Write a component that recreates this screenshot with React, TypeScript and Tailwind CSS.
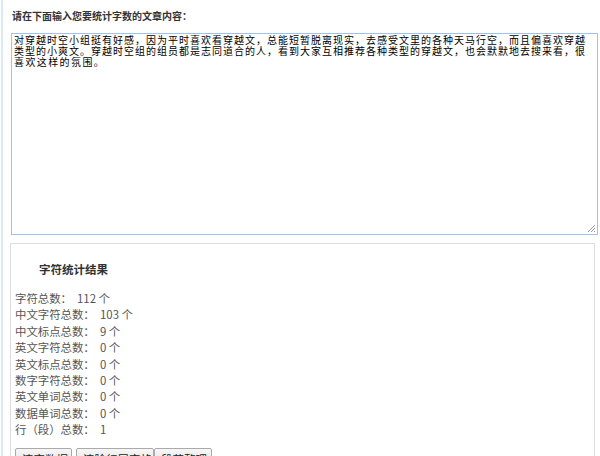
const lines = [
  '对穿越时空小组挺有好感，因为平时喜欢看穿越文，总能短暂脱离现实，去感受文里的各种天马行空，而且偏喜欢穿越',
  '类型的小爽文。穿越时空组的组员都是志同道合的人，看到大家互相推荐各种类型的穿越文，也会默默地去搜来看，很',
];

const stats = [
  ['字符总数：', '112 个', 'w-[62px]'],
  ['中文字符总数：', '103 个', 'w-[85px]'],
  ['中文标点总数：', '9 个', 'w-[85px]'],
  ['英文字符总数：', '0 个', 'w-[85px]'],
  ['英文标点总数：', '0 个', 'w-[85px]'],
  ['数字字符总数：', '0 个', 'w-[85px]'],
  ['英文单词总数：', '0 个', 'w-[85px]'],
  ['数据单词总数：', '0 个', 'w-[85px]'],
  ['行（段）总数：', '1', 'w-[85px]'],
];

const cjk = { fontFamily: '"Noto Sans CJK SC", "Liberation Sans", sans-serif' };

const btn =
  'h-[22px] pt-0 leading-[14px] border border-[#aaa] bg-gradient-to-b from-[#f7f7f7] to-[#dedede] rounded-[2px] text-left pl-[6px] self-start';

function ResizeGrip() {
  return (
    <svg width="9" height="9" viewBox="0 0 9 9" className="absolute right-[1px] bottom-[1px]">
      <path d="M8 1 L1 8 M8 4 L4 8 M8 7 L7 8" stroke="#999" strokeWidth="1" />
    </svg>
  );
}

export default function App() {
  return (
    <div className="w-[600px] h-[456px] overflow-hidden bg-white" style={cjk}>
      <div className="ml-px h-full border-l-2 border-[#dce9f7] pl-[7px] flex flex-col">
        <div className="pt-[10px] pl-[2px] text-[10px] leading-[12px] font-bold text-[#333]">
          请在下面输入您要统计字数的文章内容：
        </div>
        {/* textarea look-alike, lines laid out like the original wrap */}
        <div className="relative mt-[11px] ml-px w-[587px] h-[202px] shrink-0 border border-[#9fc1f0] pl-[2px] text-[10px] leading-[11px] text-black">
          {lines.map((l) => (
            <div key={l} className="w-[571px] whitespace-nowrap text-justify [text-align-last:justify]">
              {l}
            </div>
          ))}
          <div className="tracking-[1.4px]">喜欢这样的氛围。</div>
          <ResizeGrip />
        </div>
        <div className="mt-[8px] w-[585px] border border-[#dddddd] pt-[17px] pl-[4px] grow">
          <div className="pl-[24px] text-[11.5px] leading-[16px] font-bold text-[#333]">
            字符统计结果
          </div>
          <div className="mt-[13px] flex flex-col text-[11.4px] leading-[16.4px] text-[#555]">
            {stats.map(([label, value, w]) => (
              <div key={label} className="flex">
                <span className={`${w} shrink-0`}>{label}</span>
                <span>{value}</span>
              </div>
            ))}
          </div>
          <div className="mt-[10px] flex text-[11.5px] text-[#222]">
            <button className={`${btn} w-[57px]`}>清空数据</button>
            <button className={`${btn} ml-[4px] w-[78px]`}>清除行尾空格</button>
            <button className={`${btn} w-[58px]`}>段落整理</button>
          </div>
        </div>
      </div>
    </div>
  );
}
